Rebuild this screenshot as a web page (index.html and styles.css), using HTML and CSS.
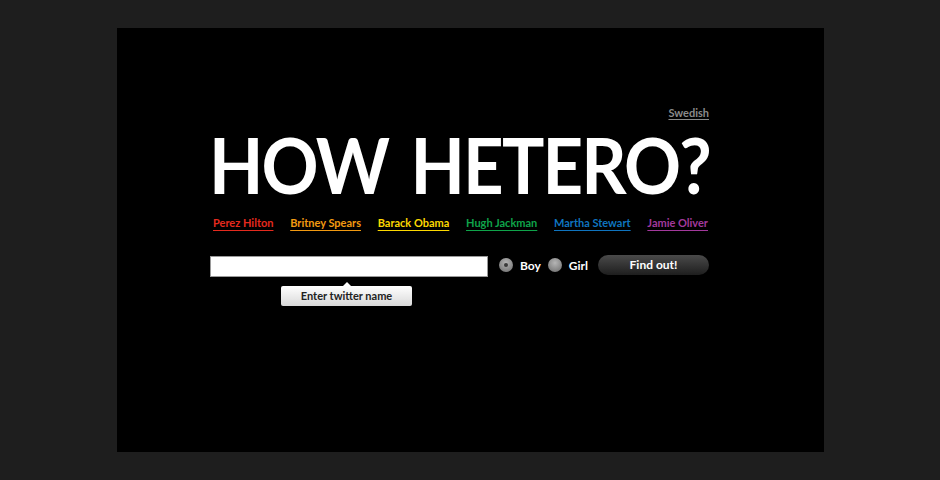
FILE: index.html
```html
<!DOCTYPE html>
<html>
<head>
<meta charset="utf-8">
<link rel="stylesheet" href="styles.css">
</head>
<body>
<div class="stage">
  <div class="content">
    <div class="lang"><a href="#">Swedish</a></div>
    <h1 class="title">HOW HETERO?</h1>
    <div class="links">
      <a href="#" class="c-red">Perez Hilton</a>
      <a href="#" class="c-orange">Britney Spears</a>
      <a href="#" class="c-yellow">Barack Obama</a>
      <a href="#" class="c-green">Hugh Jackman</a>
      <a href="#" class="c-blue">Martha Stewart</a>
      <a href="#" class="c-purple">Jamie Oliver</a>
    </div>
    <form class="form">
      <div class="field">
        <input type="text" class="name">
        <div class="tip">Enter twitter name</div>
      </div>
      <label class="radio"><span class="dot checked"></span>Boy</label>
      <label class="radio"><span class="dot"></span>Girl</label>
      <button type="button" class="find">Find out!</button>
    </form>
  </div>
</div>
</body>
</html>
```
FILE: styles.css
```css
html, body {
  margin: 0;
  padding: 0;
  background: #1e1e1e;
  font-family: Lato, "Liberation Sans", sans-serif;
}
.stage {
  margin: 28px 0 0 117px;
  width: 707px;
  height: 424px;
  background: #000;
  box-sizing: border-box;
  padding: 78px 0 0 93px;
}
.content {
  width: 499px;
  display: flex;
  flex-direction: column;
}
.lang {
  text-align: right;
  font-size: 11px;
  font-weight: 700;
  line-height: 14px;
}
.lang a {
  color: #8a8a8a;
  text-decoration: underline;
  text-underline-offset: 2px;
}
.title {
  margin: 9px 0 0 -1px;
  color: #fff;
  font-size: 76px;
  font-weight: 700;
  line-height: 72px;
  letter-spacing: -2px;
  word-spacing: 8px;
  white-space: nowrap;
  transform: scaleX(0.93);
  transform-origin: left center;
}
.links {
  display: flex;
  justify-content: space-between;
  margin-top: 15px;
  padding: 0 1px 0 3px;
  font-size: 11px;
  font-weight: 700;
  line-height: 14px;
}
.links a {
  text-decoration: underline;
  text-underline-offset: 3px;
}
.c-red { color: #e52a1e; }
.c-orange { color: #f29a11; }
.c-yellow { color: #fdd900; }
.c-green { color: #0fa44a; }
.c-blue { color: #0f74bf; }
.c-purple { color: #a3399c; }
.form {
  display: flex;
  align-items: center;
  margin-top: 24px;
  height: 22px;
}
.field {
  position: relative;
  width: 278px;
  height: 21px;
}
.name {
  box-sizing: border-box;
  width: 278px;
  height: 21px;
  margin: 0;
  border: 1px solid #9a9a9a;
  background: #fff;
  padding: 0 4px;
}
.tip {
  position: absolute;
  left: 71px;
  top: 31px;
  width: 131px;
  height: 20px;
  box-sizing: border-box;
  border-radius: 2px;
  background: linear-gradient(#ffffff, #d9d9d9);
  color: #222;
  font-size: 11px;
  font-weight: 700;
  line-height: 20px;
  text-align: center;
}
.tip::before {
  content: "";
  position: absolute;
  left: 62px;
  top: -4px;
  border-left: 4px solid transparent;
  border-right: 4px solid transparent;
  border-bottom: 4px solid #fff;
}
.radio {
  display: flex;
  align-items: center;
  color: #fff;
  font-size: 12px;
  font-weight: 700;
  margin-left: 11px;
}
.radio + .radio {
  margin-left: 7px;
}
.dot {
  width: 14px;
  height: 14px;
  border-radius: 50%;
  background: radial-gradient(circle at 50% 35%, #b5b5b5, #6a6a6a);
  margin-right: 7px;
  display: flex;
  align-items: center;
  justify-content: center;
}
.dot.checked::after {
  content: "";
  width: 4px;
  height: 4px;
  border-radius: 50%;
  background: #3a3a3a;
}
.find {
  margin-left: 10px;
  width: 112px;
  height: 20px;
  border: 0;
  border-radius: 10px;
  background: linear-gradient(#4a4a4a, #1e1e1e);
  color: #fff;
  font-family: Lato, "Liberation Sans", sans-serif;
  font-size: 12px;
  font-weight: 700;
  padding: 0 0 2px;
  cursor: pointer;
}
```
